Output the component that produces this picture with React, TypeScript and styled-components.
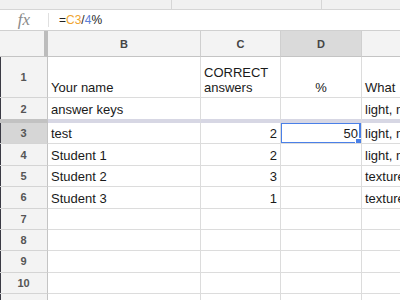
import styled, { createGlobalStyle } from "styled-components";

const GlobalStyle = createGlobalStyle`
  html, body {
    margin: 0;
    padding: 0;
    background: #fff;
  }
  body {
    font-family: "Liberation Sans", Arial, sans-serif;
    overflow: hidden;
  }
`;

const Screen = styled.div`
  width: 400px;
  height: 300px;
  overflow: hidden;
  display: flex;
  flex-direction: column;
`;

const TopBar = styled.div`
  height: 9px;
  flex-shrink: 0;
  display: flex;
  background: #f1f1f1;
  border-bottom: 1px solid #d6d6d6;
`;

const TopSegment = styled.div<{ $w: number }>`
  width: ${(p) => p.$w}px;
  flex-shrink: 0;
  border-right: 1px solid #d6d6d6;
`;

const FormulaBar = styled.div`
  height: 20px;
  flex-shrink: 0;
  display: flex;
  align-items: center;
  border-bottom: 1px solid #d0d0d0;
`;

const FxLabel = styled.div`
  width: 48px;
  height: 14px;
  flex-shrink: 0;
  display: flex;
  align-items: center;
  justify-content: center;
  border-right: 1px solid #e0e0e0;
  font-family: "Liberation Serif", "Times New Roman", serif;
  font-style: italic;
  font-size: 17px;
  color: #8a8a8a;
`;

const Formula = styled.div`
  padding-left: 10px;
  font-size: 12px;
  color: #222;
`;

const Ref = styled.span<{ $c: string }>`
  color: ${(p) => p.$c};
`;

const Sheet = styled.div`
  flex: 1;
  overflow: hidden;
`;

const Row = styled.div<{ $h: number }>`
  display: grid;
  grid-template-columns: 48px 153px 80px 81px 120px;
  height: ${(p) => p.$h}px;
`;

const CornerCell = styled.div`
  background: #f3f3f3;
  border-bottom: 1px solid #c4c4c4;
  border-right: 4px solid #bcbcbc;
`;

const ColHead = styled.div<{ $active?: boolean }>`
  display: flex;
  align-items: center;
  justify-content: center;
  background: ${(p) => (p.$active ? "#dadada" : "#f3f3f3")};
  border-bottom: 1px solid #c4c4c4;
  border-right: 1px solid #cfcfcf;
  font-size: 11px;
  font-weight: bold;
  color: #444;
`;

const RowHead = styled.div<{ $active?: boolean; $freeze?: boolean }>`
  display: flex;
  align-items: center;
  justify-content: center;
  background: ${(p) => (p.$active ? "#d6d6d6" : "#f3f3f3")};
  border-right: 1px solid #c4c4c4;
  border-bottom: ${(p) => (p.$freeze ? "4px solid #c2c2c2" : "1px solid #d4d4d4")};
  box-shadow: inset 1px 0 0 #3a3a44;
  font-size: 11px;
  font-weight: bold;
  color: #555;
`;

const Cell = styled.div<{
  $align?: "left" | "right" | "center";
  $freeze?: boolean;
  $wrap?: boolean;
}>`
  position: relative;
  display: flex;
  align-items: flex-end;
  justify-content: ${(p) =>
    p.$align === "right" ? "flex-end" : p.$align === "center" ? "center" : "flex-start"};
  padding: 0 3px 2px 3px;
  overflow: hidden;
  white-space: ${(p) => (p.$wrap ? "normal" : "nowrap")};
  text-align: ${(p) => p.$align || "left"};
  border-right: 1px solid #dcdcdc;
  border-bottom: ${(p) => (p.$freeze ? "4px solid #d7d7e4" : "1px solid #dcdcdc")};
  font-size: 13px;
  line-height: 15px;
  color: #1a1a1a;
`;

const Selection = styled.div`
  position: absolute;
  left: -1px;
  top: -1px;
  right: 0;
  bottom: -1px;
  border: 2px solid #4a80e8;
  pointer-events: none;
`;

const Handle = styled.div`
  position: absolute;
  right: -4px;
  bottom: -4px;
  width: 6px;
  height: 6px;
  background: #4a80e8;
  border: 1px solid #fff;
`;

type Align = "left" | "right" | "center";
type CellData = { text: string; align?: Align; wrap?: boolean };

const data: { n: number; h: number; freeze?: boolean; cells: CellData[] }[] = [
  {
    n: 1,
    h: 41,
    cells: [
      { text: "Your name" },
      { text: "CORRECT answers", wrap: true },
      { text: "%", align: "center" },
      { text: "What" },
    ],
  },
  {
    n: 2,
    h: 25,
    freeze: true,
    cells: [{ text: "answer keys" }, { text: "" }, { text: "" }, { text: "light, more" }],
  },
  {
    n: 3,
    h: 21.375,
    cells: [
      { text: "test" },
      { text: "2", align: "right" },
      { text: "50", align: "right" },
      { text: "light, more" },
    ],
  },
  {
    n: 4,
    h: 21.375,
    cells: [{ text: "Student 1" }, { text: "2", align: "right" }, { text: "" }, { text: "light, more" }],
  },
  {
    n: 5,
    h: 21.375,
    cells: [{ text: "Student 2" }, { text: "3", align: "right" }, { text: "" }, { text: "texture" }],
  },
  {
    n: 6,
    h: 21.375,
    cells: [{ text: "Student 3" }, { text: "1", align: "right" }, { text: "" }, { text: "texture" }],
  },
  ...[7, 8, 9, 10, 11].map((n) => ({
    n,
    h: 21.375,
    cells: [{ text: "" }, { text: "" }, { text: "" }, { text: "" }],
  })),
];

export default function App() {
  return (
    <>
      <GlobalStyle />
      <Screen>
        <TopBar>
          <TopSegment $w={171} />
          <TopSegment $w={149} />
        </TopBar>
        <FormulaBar>
          <FxLabel>fx</FxLabel>
          <Formula>
            =<Ref $c="#f0a530">C3</Ref>/<Ref $c="#5a80d8">4</Ref>%
          </Formula>
        </FormulaBar>
        <Sheet>
          <Row $h={26}>
            <CornerCell />
            <ColHead>B</ColHead>
            <ColHead>C</ColHead>
            <ColHead $active>D</ColHead>
            <ColHead />
          </Row>
          {data.map((row) => (
            <Row key={row.n} $h={row.h}>
              <RowHead $active={row.n === 3} $freeze={row.freeze}>
                {row.n}
              </RowHead>
              {row.cells.map((c, i) => (
                <Cell key={i} $align={c.align} $wrap={c.wrap} $freeze={row.freeze}>
                  {c.text}
                  {row.n === 3 && i === 2 && (
                    <Selection>
                      <Handle />
                    </Selection>
                  )}
                </Cell>
              ))}
            </Row>
          ))}
        </Sheet>
      </Screen>
    </>
  );
}
